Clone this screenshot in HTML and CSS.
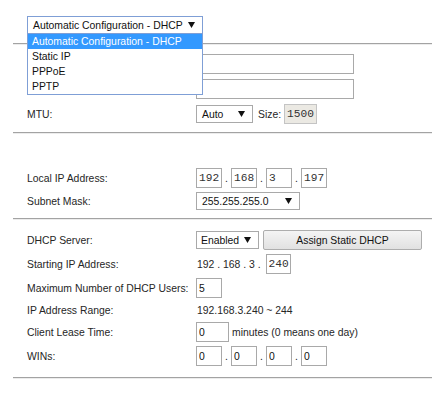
FILE: index.html
```html
<!DOCTYPE html>
<html>
<head>
<meta charset="utf-8">
<link rel="stylesheet" href="styles.css">
</head>
<body>
<div class="page">
  <div class="top">
    <div class="combo">
      <div class="select sel-wan focus"><span>Automatic Configuration - DHCP</span><svg class="arrow" width="7" height="6" viewBox="0 0 7 6"><polygon points="0,0 7,0 3.5,6"/></svg></div>
      <ul class="dropdown">
        <li class="on">Automatic Configuration - DHCP</li>
        <li>Static IP</li>
        <li>PPPoE</li>
        <li>PPTP</li>
      </ul>
    </div>
  </div>
  <div class="rule r1"></div>

  <div class="group g1">
    <div class="row"><span class="lbl"></span><input class="box wide" value=""></div>
    <div class="row"><span class="lbl"></span><input class="box wide" value=""></div>
    <div class="row"><span class="lbl">MTU:</span>
      <div class="select sel-mtu"><span>Auto</span><svg class="arrow" width="7" height="6" viewBox="0 0 7 6"><polygon points="0,0 7,0 3.5,6"/></svg></div>
      <span class="size-lbl">Size:</span><input class="box mono size" value="1500" readonly>
    </div>
  </div>
  <div class="rule r2"></div>

  <div class="group g2">
    <div class="row"><span class="lbl">Local IP Address:</span>
      <input class="box mono oct" value="192"><span class="dot">.</span><input class="box mono oct" value="168"><span class="dot">.</span><input class="box mono oct" value="3"><span class="dot">.</span><input class="box mono oct" value="197">
    </div>
    <div class="row"><span class="lbl">Subnet Mask:</span>
      <div class="select sel-mask"><span>255.255.255.0</span><svg class="arrow" width="7" height="6" viewBox="0 0 7 6"><polygon points="0,0 7,0 3.5,6"/></svg></div>
    </div>
  </div>
  <div class="rule r3"></div>

  <div class="group g3">
    <div class="row"><span class="lbl">DHCP Server:</span>
      <div class="select sel-dhcp"><span>Enabled</span><svg class="arrow" width="7" height="6" viewBox="0 0 7 6"><polygon points="0,0 7,0 3.5,6"/></svg></div>
      <button class="btn">Assign Static DHCP</button>
    </div>
    <div class="row"><span class="lbl">Starting IP Address:</span>
      <span class="val">192 . 168 . 3 .</span><input class="box mono oct start" value="240">
    </div>
    <div class="row"><span class="lbl">Maximum Number of DHCP Users:</span>
      <input class="box oct" value="5">
    </div>
    <div class="row short"><span class="lbl">IP Address Range:</span>
      <span class="val">192.168.3.240 ~ 244</span>
    </div>
    <div class="row"><span class="lbl">Client Lease Time:</span>
      <input class="box lease" value="0"><span class="hint">minutes (0 means one day)</span>
    </div>
    <div class="row"><span class="lbl">WINs:</span>
      <input class="box oct" value="0"><span class="dot">.</span><input class="box oct" value="0"><span class="dot">.</span><input class="box oct" value="0"><span class="dot">.</span><input class="box oct" value="0">
    </div>
  </div>
  <div class="rule r4"></div>
</div>
</body>
</html>
```
FILE: styles.css
```css
html, body {
  margin: 0;
  padding: 0;
  background: #fff;
}
body {
  font-family: "Liberation Sans", Arial, sans-serif;
  font-size: 10.4px;
  color: #262626;
}
.page {
  width: 437px;
}
.top {
  padding: 16px 0 0 27px;
}
.combo {
  position: relative;
  width: 176px;
}
.select {
  box-sizing: border-box;
  height: 18px;
  display: flex;
  align-items: center;
  justify-content: space-between;
  border: 1px solid #a9a9a9;
  background: #fff;
  padding: 0 7px 0 5px;
  color: #111;
  white-space: nowrap;
}
.select .arrow {
  fill: #111;
  flex: none;
}
.sel-wan { width: 176px; padding-left: 5px; }
.select.focus { border-color: #7f9fd6; }
.sel-mtu { width: 57px; }
.sel-mask { width: 104px; }
.sel-dhcp { width: 63px; padding-left: 4px; }
.dropdown {
  position: absolute;
  top: 100%;
  left: 0;
  right: 0;
  z-index: 2;
  margin: 0;
  padding: 0;
  list-style: none;
  background: #fff;
  border: 1px solid #7f9fd6;
  border-top: 0;
}
.dropdown li {
  height: 15px;
  line-height: 15px;
  padding-left: 4px;
  color: #111;
  white-space: nowrap;
}
.dropdown li.on {
  background: #3399ff;
  color: #fff;
}
.rule {
  height: 0;
  border-top: 1px solid #a3a3a3;
  border-bottom: 1px solid #ececec;
  margin: 0 5px 0 13px;
}
.r1 { margin-top: 9px; }
.r2 { margin-top: 8px; }
.r3 { margin-top: 7px; }
.r4 { margin-top: 11px; }
.group {
  display: flex;
  flex-direction: column;
  padding-left: 27px;
}
.g1 { margin-top: 9px; gap: 5px; }
.g2 { margin-top: 34px; gap: 3px; }
.g3 { margin-top: 10px; gap: 4px; }
.row {
  display: flex;
  align-items: center;
  min-height: 20px;
}
.row.short { min-height: 16px; }
.lbl {
  width: 169px;
  flex: none;
  white-space: nowrap;
}
.box {
  box-sizing: border-box;
  height: 20px;
  border: 1px solid #a9a9a9;
  padding: 0 0 0 2px;
  margin: 0;
  font-family: "Liberation Sans", Arial, sans-serif;
  font-size: 10.4px;
  color: #111;
  background: #fff;
  outline: none;
}
.box.mono {
  font-family: "Liberation Mono", "DejaVu Sans Mono", monospace;
  font-size: 11.2px;
  color: #333;
}
.wide { width: 158px; }
.oct { width: 26px; }
.start { width: 25px; margin-left: 5px; }
.lease { width: 33px; }
.size-lbl { margin-left: 5px; margin-right: 3px; }
.size {
  width: 33px;
  background: #ebe9e3;
  border-color: #c4c4c4;
  padding-left: 2px;
}
.dot {
  width: 9px;
  text-align: center;
  flex: none;
}
.val { margin-left: 1px; white-space: nowrap; }
.hint { margin-left: 3px; white-space: nowrap; }
.btn {
  box-sizing: border-box;
  width: 159px;
  height: 20px;
  margin: 0 0 0 4px;
  padding: 0;
  border: 1px solid #adadad;
  border-radius: 2px;
  background: linear-gradient(#f4f4f4, #e1e1e1);
  font-family: "Liberation Sans", Arial, sans-serif;
  font-size: 10.4px;
  color: #111;
}
```
